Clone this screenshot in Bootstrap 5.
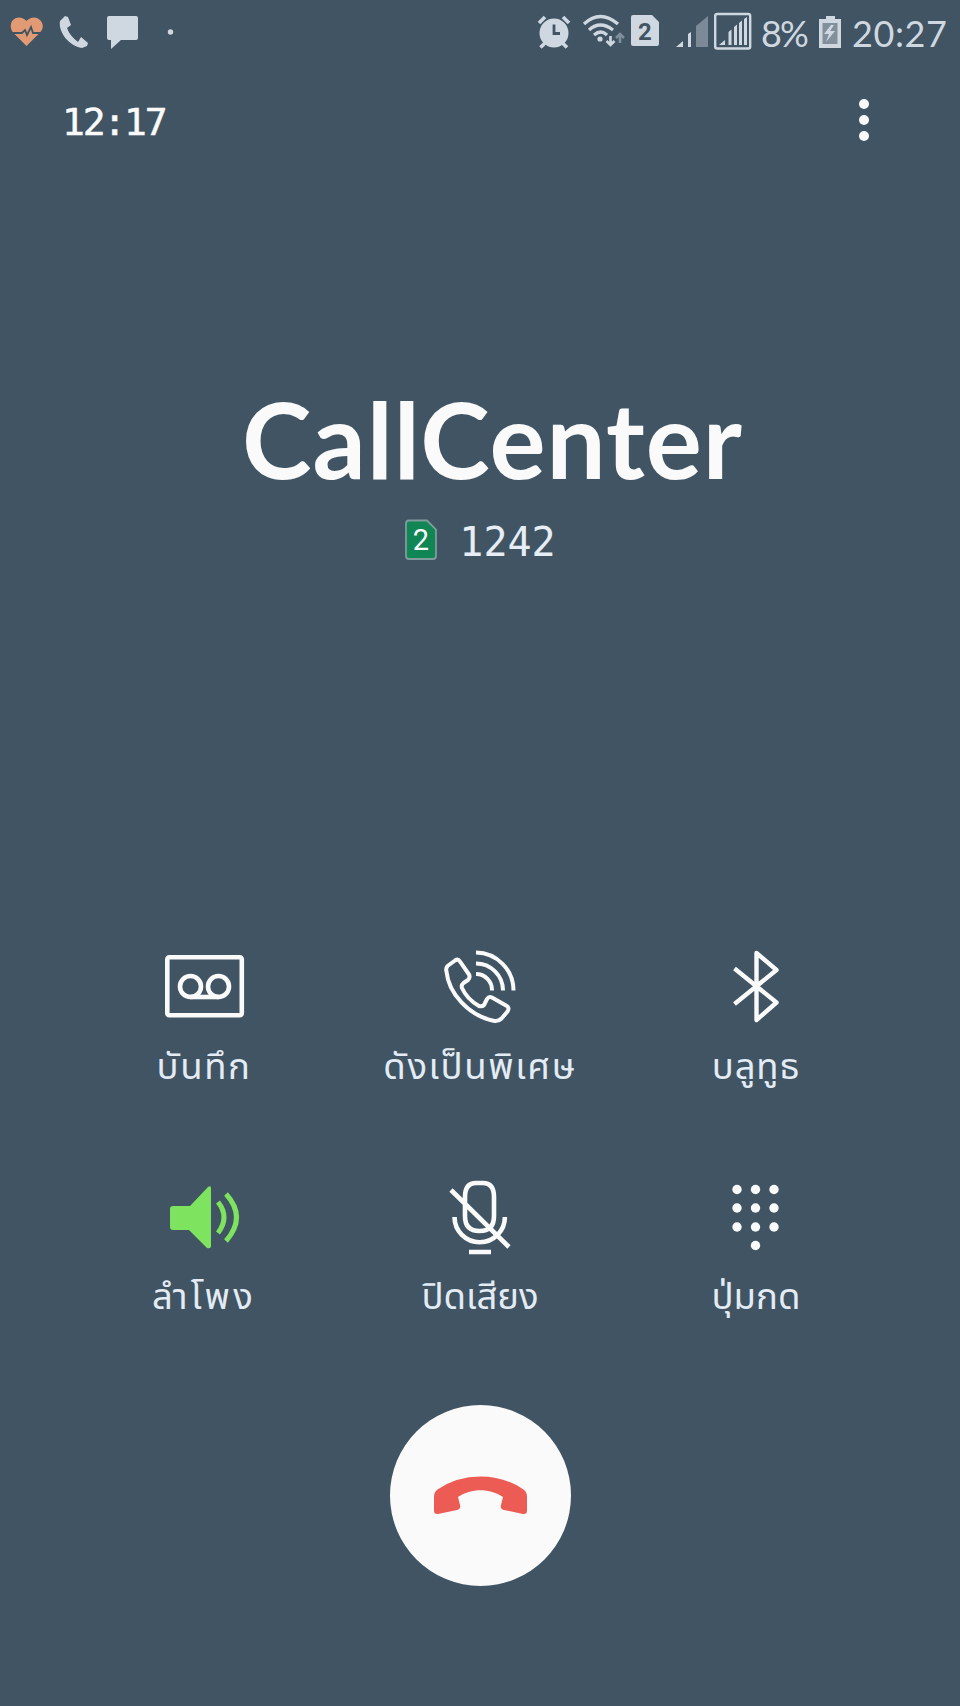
<!DOCTYPE html>
<html lang="th">
<head>
<meta charset="utf-8">
<meta name="viewport" content="width=device-width, initial-scale=1">
<title>CallCenter</title>
<link href="https://cdn.jsdelivr.net/npm/bootstrap@5.3.0/dist/css/bootstrap.min.css" rel="stylesheet">
<style>
body{background:#405463;color:#fafafa;font-family:"Lato","Noto Sans Thai","Noto Sans",sans-serif}
.screen{width:960px;height:1706px}
.screen svg{display:block;flex:none}
.statusbar{height:64px;color:#cfd8e1}
.status-text{font:400 36px/66px "Lato",sans-serif;white-space:nowrap}
.pct{width:57px;padding-left:5px;letter-spacing:-2px}
.clock{padding-left:7px;width:115px;letter-spacing:.6px}
.topline{height:112px}
.timer{font:400 38px/40px "DejaVu Sans Mono",monospace;letter-spacing:-2.2px;padding:38px 0 0 62px;-webkit-text-stroke:.5px}
.caller{margin-top:203px;font:700 105px/118px "Lato",sans-serif;letter-spacing:1px;padding-left:25px}
.line{margin-top:15px;height:60px}
.number{font:400 40px/60px "DejaVu Sans Mono",monospace;color:#e6edf5;margin-left:21px}
.line .sim{margin-bottom:4px}
.sim text{font-family:Roboto,sans-serif}
.controls{margin:374px 66px 0}
.control{height:230px;color:#e3ebf4}
.control .caption-th{font-size:36.500px;line-height:50px;margin-top:14px;white-space:nowrap}
.gap-sm{letter-spacing:.8px}
.gap-md{letter-spacing:1.600px}
.gap-lg{letter-spacing:3.200px}
.hangup{width:181px;height:181px;background:#fafafa;margin-top:-1px}
</style>
</head>
<body>
<main class="screen d-flex flex-column overflow-hidden">
<header class="statusbar d-flex align-items-start justify-content-between">
 <div class="d-flex">
  <svg width="50" height="64" viewBox="0 0 50 64"><path fill="#e19a73" d="M26.500 46 13 32.500C10 29 10 23 13 20c4-4 10-3 13.500 1 3.500-4 9.500-5 13.500-1s3.500 9 0 12.500Z"/><path d="M12 33h10l3-3 2 5 4-8 2 6h9" fill="none" stroke="#405463" stroke-width="1.800"/></svg>
  <svg width="50" height="64" viewBox="50 0 50 64"><path fill="currentColor" d="m65 16 3 1 3 8-4 3c2 6 6 10 11 14l3-5 7 6-1 3-5 2C69 46 58 32 60 21Z"/></svg>
  <svg width="50" height="64" viewBox="100 0 50 64"><path fill="currentColor" d="M109 16h27q2 0 2 2v20q0 2-2 2h-15l-10 9v-9h-2q-2 0-2-2V18q0-2 2-2Z"/></svg>
  <svg width="40" height="64" viewBox="150 0 40 64"><circle cx="170.500" cy="32" r="2.700" fill="currentColor"/></svg>
 </div>
 <div class="d-flex">
  <svg width="45" height="64" viewBox="532 0 45 64"><g fill="none" stroke="currentColor" stroke-width="3.600"><path d="m539 23 6-6m18 0 6 6M545 43l-4.500 4.500m22-4.500 4.500 4.500"/></g><circle cx="554" cy="33" r="14.500" fill="currentColor"/><path d="M554 24.500V33.500h6" fill="none" stroke="#405463" stroke-width="2.800"/></svg>
  <svg width="51" height="64" viewBox="577 0 51 64"><g fill="none" stroke="currentColor" stroke-width="3.200"><path d="M584 24q16-15 34 0M589 30q11-10 24 0M594 35q7-6 13 0"/></g><circle cx="600" cy="39" r="2.600" fill="currentColor"/><path d="M610.500 36v9m-4-4 4 4 4-4" fill="none" stroke="currentColor" stroke-width="2.600"/><path d="M620 43v-9m-4 4 4-4 4 4" fill="none" stroke="#7f8f9b" stroke-width="2.600"/></svg>
  <svg class="sim" width="40" height="64" viewBox="628 0 40 64"><path fill="currentColor" d="M633 15h19l7 7v22q0 2-2 2h-24q-2 0-2-2V17q0-2 2-2Z"/><text x="645" y="40" text-anchor="middle" font-size="24" font-weight="700" fill="#405463">2</text></svg>
  <svg width="44" height="64" viewBox="668 0 44 64"><path fill="#7b8a96" d="M696 47V26l12-10v31Z"/><path fill="currentColor" d="m676 47 7-6v6Zm12 0V34l3-2v15Z"/></svg>
  <svg width="44" height="64" viewBox="712 0 44 64"><rect x="715.200" y="14" width="35" height="34.500" rx="2" fill="none" stroke="currentColor" stroke-width="2.400"/><path fill="currentColor" d="m719 45 6-5v5Zm9.500 0V32l3-2.500V45Zm5.500 0V27l3-2.500V45Zm5 0V23l3-2.500V45Zm5 0V19l3-2v28Z"/></svg>
  <span class="status-text pct">8%</span>
  <svg width="32" height="64" viewBox="813 0 32 64"><path fill="currentColor" d="M826 16h9v3h6v29h-22V19h7Z"/><path fill="#82909c" d="M822.500 23h15v21h-15Z"/><path fill="currentColor" d="m831 25-7 9h5l-3 8 9-11h-5l4-6Z"/></svg>
  <span class="status-text clock">20:27</span>
 </div>
</header>
<div class="topline d-flex justify-content-between">
 <div class="timer">12:17</div>
 <svg width="112" height="112" viewBox="848 64 112 112" fill="#fafafa"><circle cx="864" cy="104" r="5"/><circle cx="864" cy="120" r="5"/><circle cx="864" cy="136" r="5"/></svg>
</div>
<h1 class="caller text-center mb-0">CallCenter</h1>
<div class="line d-flex justify-content-center align-items-center">
 <svg class="sim" width="34" height="42" viewBox="0 0 34 42"><path d="M5 1.500h18l9 9V37q0 3-3 3H5q-3 0-3-3V4.500q0-3 3-3Z" fill="#0f8653" stroke="#809c9c" stroke-width="1.800"/><text x="17" y="31" text-anchor="middle" font-size="29" fill="#fafafa">2</text></svg>
 <span class="number">1242</span>
</div>
<section class="controls row g-0">
 <div class="control col-4 d-flex flex-column align-items-center">
  <svg width="90" height="80" viewBox="159 946 90 80" fill="none" stroke="#fafafa" stroke-width="4.600"><rect x="167.300" y="957.300" width="74.500" height="58" rx="2"/><circle cx="190.500" cy="986.500" r="10.500"/><circle cx="218.500" cy="986.500" r="10.500"/><path d="M190 997h29"/></svg>
  <span class="caption-th gap-md">บันทึก</span>
 </div>
 <div class="control col-4 d-flex flex-column align-items-center">
  <svg width="90" height="80" viewBox="435 946 90 80" fill="none" stroke="#fafafa" stroke-width="4" stroke-linejoin="round"><path d="M446.500 971.500q-1-3 1-5.500l7.500-5.500q3-2 5 1l9 13q1.500 3-1 5.500l-4.500 3q-2.500 2-1.500 5c4 9 10 14 17 18q3 1 5-1l3-6q2-3 5-1.500l14 8q4 2 1.500 6l-6 7q-3 3-7 2.500c-26-5-46-28-48-49.500Z"/><path d="M476 952.500a38 38 0 0 1 37.500 38M476 963.500a27 27 0 0 1 27 27M476 974a16 16 0 0 1 16 16.500"/></svg>
  <span class="caption-th gap-md">ดังเป็นพิเศษ</span>
 </div>
 <div class="control col-4 d-flex flex-column align-items-center">
  <svg width="90" height="80" viewBox="711 946 90 80" fill="none" stroke="#fafafa" stroke-width="4.400" stroke-linejoin="round"><path d="m734.500 968.500 42 34-20 17.500v-67l20 17-42 34"/></svg>
  <span class="caption-th gap-sm">บลูทูธ</span>
 </div>
 <div class="control col-4 d-flex flex-column align-items-center">
  <svg width="90" height="80" viewBox="159 1176 90 80"><path fill="#7ee35e" d="M173 1206h17l18-19q3-2 3 1v58q0 3-4 2l-18-18h-16q-3 0-3-3v-18q0-3 3-3Z"/><path d="M218 1202q12 15 0 31M226 1194q21 23 0 47" fill="none" stroke="#7ee35e" stroke-width="5"/></svg>
  <span class="caption-th gap-lg">ลำโพง</span>
 </div>
 <div class="control col-4 d-flex flex-column align-items-center">
  <svg width="90" height="80" viewBox="435 1176 90 80" fill="none" stroke="#fafafa" stroke-width="4.600"><path d="M465 1197q0-14 11-14h7q11 0 11 14v19q0 15-14.500 15t-14.500-15ZM454.500 1217a25.200 25.200 0 0 0 50.400 0M451 1190l58 57M469 1252h22"/></svg>
  <span class="caption-th">ปิดเสียง</span>
 </div>
 <div class="control col-4 d-flex flex-column align-items-center">
  <svg width="90" height="80" viewBox="711 1176 90 80" fill="#fafafa"><circle cx="737" cy="1189.500" r="4.700"/><circle cx="755.500" cy="1189.500" r="4.700"/><circle cx="774" cy="1189.500" r="4.700"/><circle cx="737" cy="1208" r="4.700"/><circle cx="755.500" cy="1208" r="4.700"/><circle cx="774" cy="1208" r="4.700"/><circle cx="737" cy="1227" r="4.700"/><circle cx="755.500" cy="1227" r="4.700"/><circle cx="774" cy="1227" r="4.700"/><circle cx="755.500" cy="1245.500" r="4.700"/></svg>
  <span class="caption-th">ปุ่มกด</span>
 </div>
</section>
<button type="button" class="hangup btn rounded-circle border-0 p-0 flex-shrink-0 align-self-center" aria-label="วางสาย">
 <svg width="181" height="181" viewBox="389.500 1405 181 181"><path fill="#ec5c55" d="M437 1489.500q19-13 43-13t43 13q3.500 2.500 3.500 7v14q0 4-4 3.500l-19-4q-4-1-3-5l2-8c-13-9-32-9-45 0l2 8q1 4-3 5l-19 4q-4 .5-4-3.500v-14q0-4.500 3.500-7Z"/></svg>
</button>
</main>
<script src="https://cdn.jsdelivr.net/npm/bootstrap@5.3.0/dist/js/bootstrap.bundle.min.js"></script>
</body>
</html>
